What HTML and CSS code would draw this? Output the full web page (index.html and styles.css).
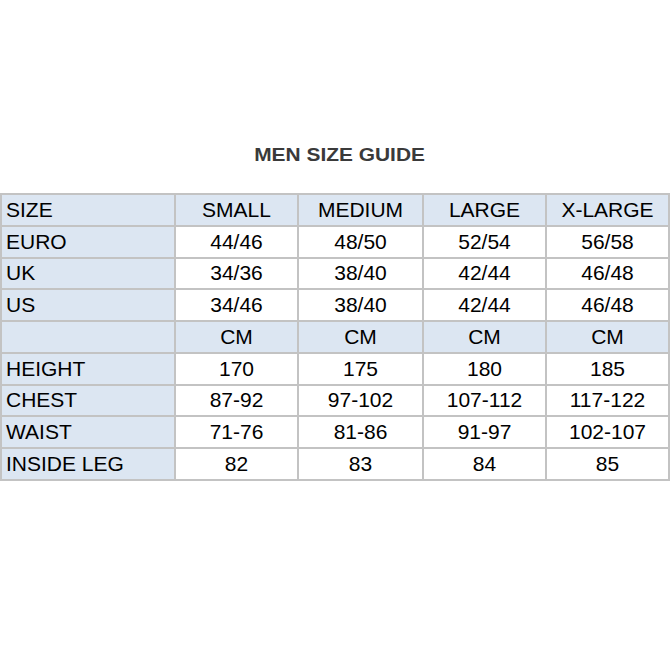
FILE: index.html
```html
<!DOCTYPE html>
<html>
<head>
<meta charset="utf-8">
<link rel="stylesheet" href="styles.css">
</head>
<body>
<div class="page">
  <div class="title-wrap"><h1 class="title">MEN SIZE GUIDE</h1></div>
  <table class="guide">
    <colgroup>
      <col class="c0"><col class="c1"><col class="c2"><col class="c3"><col class="c4">
    </colgroup>
    <tr class="hd"><td class="lbl">SIZE</td><td>SMALL</td><td>MEDIUM</td><td>LARGE</td><td>X-LARGE</td></tr>
    <tr><td class="lbl">EURO</td><td>44/46</td><td>48/50</td><td>52/54</td><td>56/58</td></tr>
    <tr><td class="lbl">UK</td><td>34/36</td><td>38/40</td><td>42/44</td><td>46/48</td></tr>
    <tr><td class="lbl">US</td><td>34/46</td><td>38/40</td><td>42/44</td><td>46/48</td></tr>
    <tr class="hd"><td class="lbl"></td><td>CM</td><td>CM</td><td>CM</td><td>CM</td></tr>
    <tr><td class="lbl">HEIGHT</td><td>170</td><td>175</td><td>180</td><td>185</td></tr>
    <tr><td class="lbl">CHEST</td><td>87-92</td><td>97-102</td><td>107-112</td><td>117-122</td></tr>
    <tr><td class="lbl">WAIST</td><td>71-76</td><td>81-86</td><td>91-97</td><td>102-107</td></tr>
    <tr><td class="lbl">INSIDE LEG</td><td>82</td><td>83</td><td>84</td><td>85</td></tr>
  </table>
</div>
</body>
</html>
```

FILE: styles.css
```css
html, body {
  margin: 0;
  padding: 0;
  background: #ffffff;
}
.page {
  width: 671px;
  height: 671px;
  padding-top: 144px;
  box-sizing: border-box;
  font-family: "Liberation Sans", Arial, sans-serif;
}
.title-wrap {
  text-align: center;
  margin: 0 0 27px 0;
  padding-left: 9px;
}
.title {
  display: inline-block;
  margin: 0;
  font-size: 18.5px;
  line-height: 22px;
  font-weight: bold;
  color: #3a3a3a;
  transform: scaleX(1.13);
}
.guide {
  border-collapse: collapse;
  width: 670px;
  table-layout: fixed;
}
.c0 { width: 174px; }
.c1 { width: 123px; }
.c2 { width: 125px; }
.c3 { width: 123px; }
.c4 { width: 123px; }
.guide td {
  border: 2px solid #c3c3c3;
  height: 31.75px;
  padding: 0 0 3px 0;
  box-sizing: border-box;
  vertical-align: bottom;
  text-align: center;
  font-size: 21px;
  line-height: 24px;
  color: #000000;
  background: #ffffff;
}
.guide td.lbl {
  text-align: left;
  padding-left: 4px;
  background: #dce6f2;
}
.guide tr.hd td {
  background: #dce6f2;
}
```
